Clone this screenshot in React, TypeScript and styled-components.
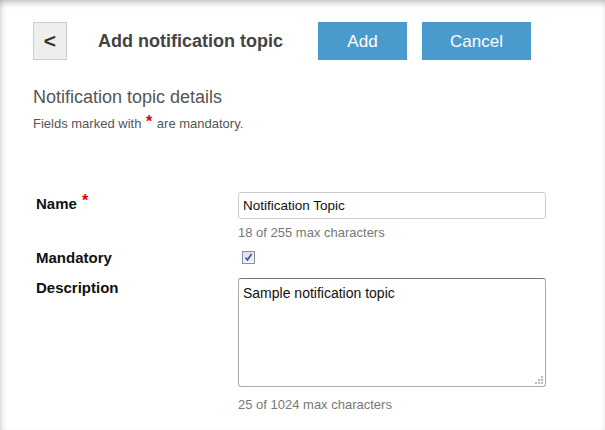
import React from "react";
import styled, { createGlobalStyle } from "styled-components";

const Global = createGlobalStyle`
  html, body { margin: 0; padding: 0; background: #fff; }
  body { font-family: "Liberation Sans", Arial, sans-serif; }
`;

const Page = styled.div`
  min-height: 430px;
  box-sizing: border-box;
  padding: 22px 0 0 33px;
  box-shadow: inset 0 5px 7px -3px rgba(0, 0, 0, 0.28), inset 5px 0 7px -4px rgba(0, 0, 0, 0.14);
`;

const Header = styled.div`
  display: flex;
  align-items: center;
  height: 38px;
`;

const BackButton = styled.button`
  width: 34px;
  height: 38px;
  box-sizing: border-box;
  background: #eeeeee;
  border: 1px solid #cccccc;
  padding: 0;
  margin-right: 31px;
  font-family: "Liberation Sans", Arial, sans-serif;
  font-weight: bold;
  font-size: 21px;
  color: #333;
  display: flex;
  align-items: center;
  justify-content: center;
`;

const Title = styled.h1`
  margin: 0 35px 0 0;
  font-size: 18px;
  font-weight: bold;
  color: #444;
`;

const ActionButton = styled.button<{ $w: number }>`
  width: ${(p) => p.$w}px;
  height: 38px;
  background: #4a9bcd;
  color: #fff;
  border: none;
  font-family: "Liberation Sans", Arial, sans-serif;
  font-size: 17px;
  margin-right: 15px;
  padding: 1px 0 0 0;
`;

const SectionTitle = styled.h2`
  margin: 27px 0 0 0;
  font-size: 18px;
  font-weight: normal;
  color: #555;
  line-height: 21px;
`;

const Hint = styled.p`
  margin: 8px 0 0 0;
  font-size: 13px;
  color: #555;
  line-height: 15px;
`;

const Star = styled.span`
  color: #d00;
  font-size: 16px;
  font-weight: bold;
  vertical-align: top;
  line-height: 12px;
  margin: 0 1px;
`;

const Form = styled.div`
  margin: 61px 0 0 3px;
  display: grid;
  grid-template-columns: 202px 308px;
`;

const Label = styled.div<{ $top: number }>`
  font-size: 15px;
  font-weight: bold;
  color: #111;
  padding-top: ${(p) => p.$top}px;
`;

const Field = styled.div<{ $top?: number }>`
  display: flex;
  flex-direction: column;
  margin-top: ${(p) => p.$top ?? 0}px;
`;

const TextInput = styled.div`
  height: 27px;
  box-sizing: border-box;
  border: 1px solid #cccccc;
  border-radius: 3px;
  padding: 0 4px;
  font-size: 13.5px;
  color: #111;
  display: flex;
  align-items: center;
`;

const TextArea = styled.div`
  position: relative;
  height: 109px;
  box-sizing: border-box;
  border: 1px solid #aaa;
  border-top-color: #777;
  border-radius: 3px;
  padding: 6px 4px;
  font-size: 14px;
  color: #111;
`;

const Grip = styled.svg`
  position: absolute;
  right: 2px;
  bottom: 2px;
`;

const Counter = styled.div<{ $top?: number }>`
  font-size: 13px;
  color: #777;
  margin-top: ${(p) => p.$top ?? 6}px;
  line-height: 15px;
`;

const CheckBox = styled.div`
  width: 13px;
  height: 13px;
  box-sizing: border-box;
  border: 1px solid #8f8f9d;
  background: linear-gradient(#dcdfe6, #f4f5f8);
  margin: 11px 0 0 4px;
  display: flex;
  align-items: center;
  justify-content: center;
`;

export default function App() {
  return (
    <>
      <Global />
      <Page>
        <Header>
          <BackButton>&lt;</BackButton>
          <Title>Add notification topic</Title>
          <ActionButton $w={89}>Add</ActionButton>
          <ActionButton $w={109}>Cancel</ActionButton>
        </Header>
        <SectionTitle>Notification topic details</SectionTitle>
        <Hint>
          Fields marked with <Star>*</Star> are mandatory.
        </Hint>
        <Form>
          <Label $top={3}>
            Name <Star>*</Star>
          </Label>
          <Field>
            <TextInput>Notification Topic</TextInput>
            <Counter>18 of 255 max characters</Counter>
          </Field>
          <Label $top={9}>Mandatory</Label>
          <Field>
            <CheckBox>
              <svg width="9" height="9" viewBox="0 0 9 9">
                <path d="M1.5 4.5 L3.5 7 L7.5 1" stroke="#3c4d9a" strokeWidth="1.6" fill="none" />
              </svg>
            </CheckBox>
          </Field>
          <Label $top={13}>Description</Label>
          <Field $top={12}>
            <TextArea>
              Sample notification topic
              <Grip width="8" height="8" viewBox="0 0 8 8">
                <rect x="6" y="0" width="2" height="2" fill="#bbb" />
                <rect x="3" y="3" width="2" height="2" fill="#bbb" />
                <rect x="6" y="3" width="2" height="2" fill="#bbb" />
                <rect x="0" y="6" width="2" height="2" fill="#bbb" />
                <rect x="3" y="6" width="2" height="2" fill="#bbb" />
                <rect x="6" y="6" width="2" height="2" fill="#bbb" />
              </Grip>
            </TextArea>
            <Counter $top={10}>25 of 1024 max characters</Counter>
          </Field>
        </Form>
      </Page>
    </>
  );
}
